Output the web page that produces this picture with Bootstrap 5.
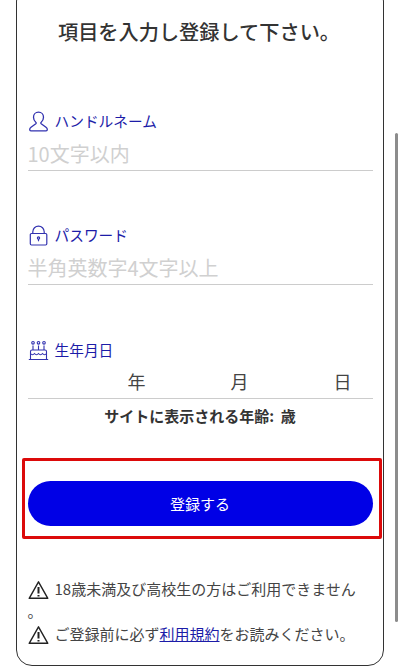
<!DOCTYPE html>
<html lang="ja">
<head>
<meta charset="utf-8">
<title>登録</title>
<link rel="stylesheet" href="https://cdn.jsdelivr.net/npm/bootstrap@5.3.0/dist/css/bootstrap.min.css">
<style>
html,body{height:666px;overflow:hidden;background:#fff}
body{font-family:"Noto Sans CJK JP","Liberation Sans",sans-serif;color:#333;position:relative}
.reg-card{width:368px;height:681px;margin:-15px 0 0 16px;border:1.5px solid #333;border-radius:16px;padding:0 10.5px;background:#fff}
.reg-title{font-size:20.2px;font-weight:500;line-height:26px;margin:33px 0 0 0;padding-right:2px;color:#333}
.reg-label{font-size:14.7px;line-height:24px;color:#1c1ca8;gap:6px}
.reg-label svg{flex:none;stroke:#3232b0;fill:none}
.reg-field{font-size:20px;line-height:28px;height:38px;padding-top:7px;color:#d0d0d0;border-bottom:1px solid #ccc}
.first-group{margin-top:64px}
.next-group{margin-top:52px}
.last-group{margin-top:53px}
.date-row{font-size:18px;line-height:26px;color:#444;height:37px;padding:6px 0 0 100px;border-bottom:1px solid #ccc;gap:85px}
.age-line{font-size:15px;font-weight:700;line-height:22px;margin-top:6px;color:#333}
.cta-frame{margin:31px -9px 0 -6px;height:81px;border:3px solid #dc0a0a;border-radius:2px;padding:20px 6px 0 3px}
.cta-btn{display:block;width:100%;height:45px;padding:0;border:0;border-radius:23px;background:#0000e6;color:#fff;font-size:15px;line-height:43px}
.note-block{margin-top:39px;font-size:15px;line-height:22px;color:#444}
.note-block a{color:#1c1ca8}
.note-block svg{vertical-align:-5px;margin-right:6px;fill:none;stroke:#222}
.note-next{margin-top:1px}
.page-thumb{position:absolute;left:395px;top:133px;width:3px;height:489px;background:#8c8c8c;border-radius:2px}
</style>
</head>
<body>
<main class="reg-card">
  <h1 class="reg-title text-center">項目を入力し登録して下さい。</h1>

  <section class="first-group">
    <div class="reg-label d-flex align-items-center">
      <svg width="21" height="21" viewBox="0 0 21 21" stroke-width="1.3"><path d="M10.5 1.200c-3 0-5 2.300-5 5 0 2.100.9 3.800 2.300 5 .5.400.5 1.100 0 1.500L3 16.300c-.9.700-1.300 1.500-1.300 2.300 0 .7.500 1.200 1.200 1.200h15.200c.7 0 1.200-.5 1.200-1.200 0-.8-.4-1.600-1.300-2.300l-4.800-3.600c-.5-.4-.5-1.100 0-1.500 1.400-1.200 2.300-2.900 2.300-5 0-2.700-2-5-5-5z"/></svg>
      <span>ハンドルネーム</span>
    </div>
    <div class="reg-field">10文字以内</div>
  </section>

  <section class="next-group">
    <div class="reg-label d-flex align-items-center">
      <svg width="21" height="21" viewBox="0 0 21 21" stroke-width="1.2"><rect x="2.300" y="8.500" width="16.500" height="11.500" rx="1.200"/><path d="M4.800 8.500V6.800a5.700 5.700 0 0 1 11.400 0v1.700"/><circle cx="10.500" cy="13" r="1.100"/><path d="M10.500 14v2.300"/></svg>
      <span>パスワード</span>
    </div>
    <div class="reg-field">半角英数字4文字以上</div>
  </section>

  <section class="last-group">
    <div class="reg-label d-flex align-items-center">
      <svg width="21" height="21" viewBox="0 0 21 21" stroke-width="1.100"><path d="M.8 19.500h19.400M2.500 19.500v-8c0-1 .7-1.500 1.500-1.500h13c.8 0 1.500.5 1.500 1.500v8M2.500 13.500c1.300 1.600 2.700 1.600 4 0 1.300 1.600 2.700 1.600 4 0 1.300 1.600 2.700 1.600 4 0 1.300 1.600 2.700 1.600 4 0M5 10V5.500M10.500 10V5.500M16 10V5.500"/><circle cx="5" cy="2.800" r="1.300"/><circle cx="10.500" cy="2.800" r="1.300"/><circle cx="16" cy="2.800" r="1.300"/></svg>
      <span>生年月日</span>
    </div>
    <div class="date-row d-flex"><span>年</span><span>月</span><span>日</span></div>
    <p class="age-line text-center mb-0">サイトに表示される年齢:&nbsp; 歳</p>
  </section>

  <div class="cta-frame">
    <button type="button" class="cta-btn">登録する</button>
  </div>

  <div class="note-block">
    <div><svg width="21" height="20" viewBox="0 0 21 20" stroke-width="1.4"><path d="M10.500 1.800 1.200 18.300h18.600z" stroke-linejoin="round"/><path d="M10.500 7v6.500M10.500 15v1.600" stroke-width="2"/></svg>18歳未満及び高校生の方はご利用できません<br>。</div>
    <div class="note-next"><svg width="21" height="20" viewBox="0 0 21 20" stroke-width="1.4"><path d="M10.500 1.800 1.200 18.300h18.600z" stroke-linejoin="round"/><path d="M10.500 7v6.500M10.500 15v1.600" stroke-width="2"/></svg>ご登録前に必ず<a href="#">利用規約</a>をお読みください。</div>
  </div>
</main>
<div class="page-thumb"></div>
<script src="https://cdn.jsdelivr.net/npm/bootstrap@5.3.0/dist/js/bootstrap.bundle.min.js"></script>
</body>
</html>
